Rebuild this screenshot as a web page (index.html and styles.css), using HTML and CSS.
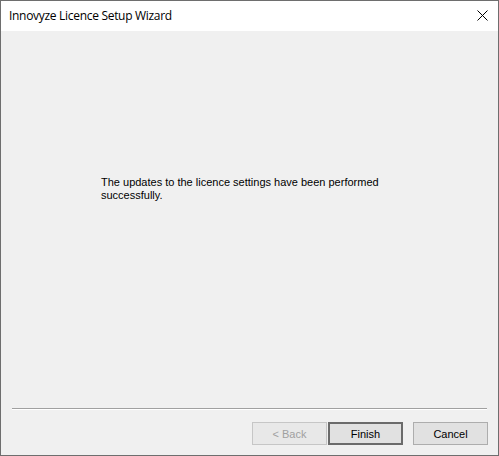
FILE: index.html
```html
<!DOCTYPE html>
<html>
<head>
<meta charset="utf-8">
<link rel="stylesheet" href="styles.css">
</head>
<body>
<div class="window">
  <div class="titlebar">
    <span class="title">Innovyze Licence Setup Wizard</span>
    <span class="close">
      <svg width="11" height="11" viewBox="0 0 11 11"><path d="M0.5 0.5 L10.5 10.5 M10.5 0.5 L0.5 10.5" stroke="#000" stroke-width="1" fill="none"/></svg>
    </span>
  </div>
  <div class="content">
    <div class="main">
      <p class="message">The updates to the licence settings have been performed successfully.</p>
    </div>
    <div class="separator"></div>
    <div class="buttons">
      <button class="btn disabled">&lt; Back</button>
      <button class="btn default">Finish</button>
      <button class="btn cancel">Cancel</button>
    </div>
  </div>
</div>
</body>
</html>
```
FILE: styles.css
```css
html, body {
  margin: 0;
  padding: 0;
}
body {
  width: 499px;
  height: 456px;
  overflow: hidden;
}
.window {
  box-sizing: border-box;
  width: 499px;
  height: 456px;
  border: 1px solid #6e6e6e;
  display: flex;
  flex-direction: column;
  background: #f0f0f0;
}
.titlebar {
  height: 30px;
  background: #ffffff;
  display: flex;
  align-items: center;
  justify-content: space-between;
  padding-left: 8px;
  flex-shrink: 0;
}
.title {
  font-family: "Open Sans", "Noto Sans", sans-serif;
  font-size: 12px;
  color: #000;
  letter-spacing: -0.3px;
  margin-top: -1px;
}
.close {
  width: 32px;
  height: 30px;
  display: flex;
  align-items: center;
  justify-content: center;
  margin-top: -2px;
}
.close svg {
  display: block;
}
.content {
  flex: 1;
  display: flex;
  flex-direction: column;
  font-family: "Liberation Sans", Arial, sans-serif;
  font-size: 11px;
}
.main {
  height: 377px;
  padding-left: 100px;
  padding-top: 145px;
  box-sizing: border-box;
}
.message {
  margin: 0;
  width: 300px;
  line-height: 13px;
  color: #000;
}
.separator {
  margin: 0 11px;
  height: 1px;
  background: #a0a0a0;
  border-bottom: 1px solid #ffffff;
}
.buttons {
  display: flex;
  justify-content: flex-end;
  padding-top: 12px;
  padding-right: 10px;
}
.btn {
  box-sizing: border-box;
  width: 75px;
  height: 23px;
  margin: 0;
  padding: 0;
  font-family: "Liberation Sans", Arial, sans-serif;
  font-size: 11px;
  color: #000;
  background: #e1e1e1;
  border: 1px solid #adadad;
  border-radius: 0;
  outline: none;
}
.btn.disabled {
  background: #e8e8e8;
  border-color: #c6c6c6;
  color: #a0a0a0;
}
.btn.default {
  margin-left: 1px;
  border: 2px solid #6b6b6b;
}
.btn.cancel {
  margin-left: 10px;
}
```
